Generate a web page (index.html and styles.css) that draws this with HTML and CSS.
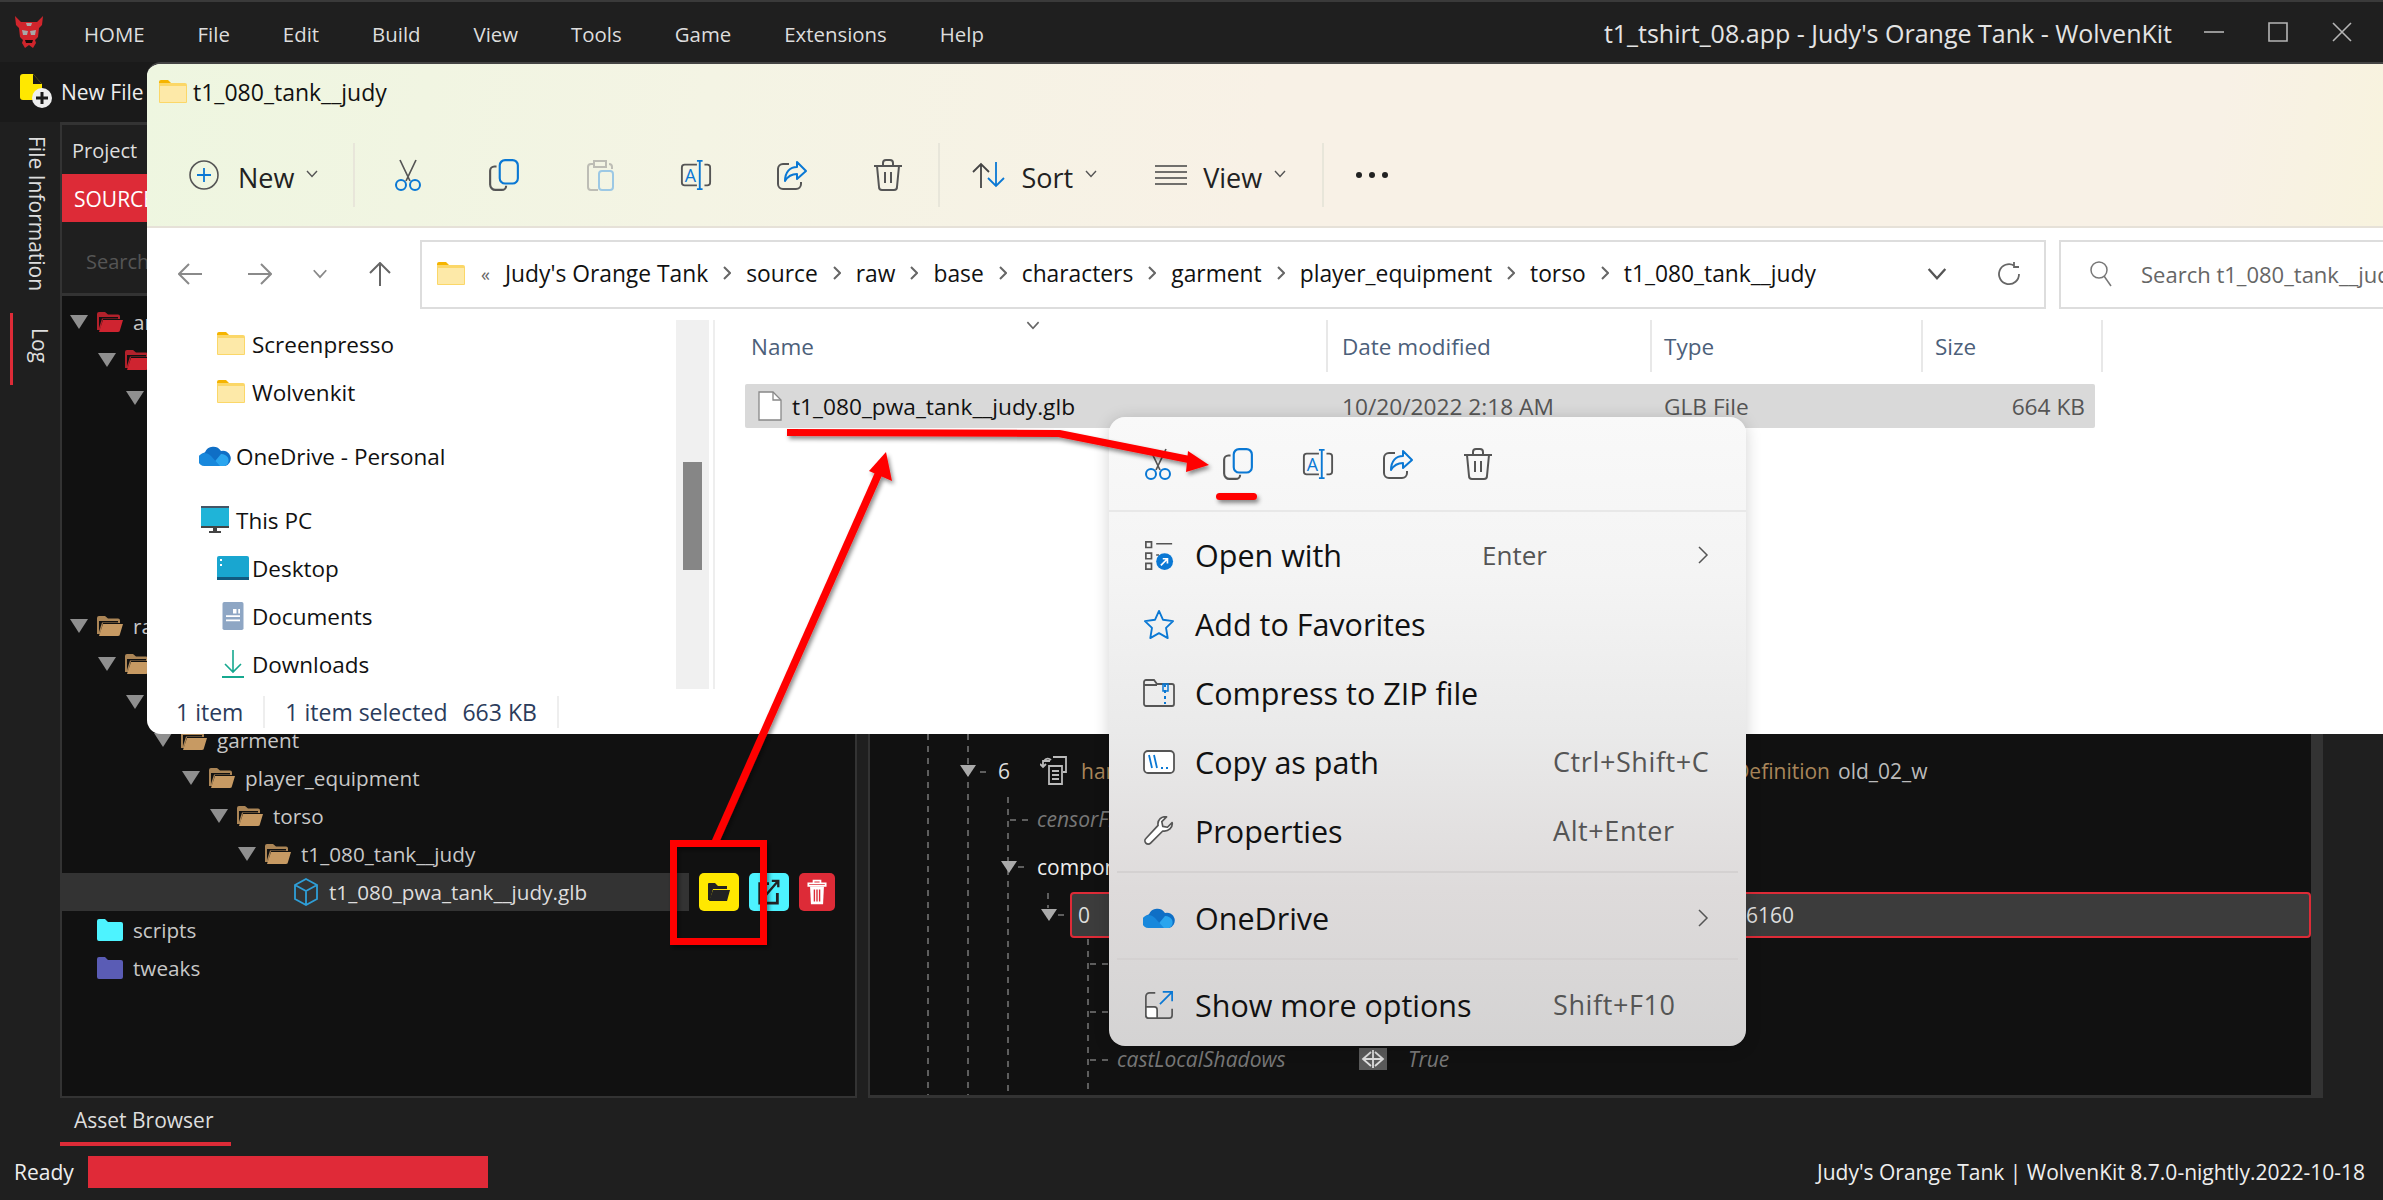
FILE: index.html
```html
<!DOCTYPE html>
<html lang="en">
<head>
  <meta charset="UTF-8">
  <title>t1_tshirt_08.app - Judy's Orange Tank - WolvenKit</title>
  <link rel="stylesheet" href="styles.css">
</head>
<body>

  <!-- shared icons -->
  <svg class="defs" width="0" height="0">
    <symbol id="i-folder" viewBox="0 0 28 24">
      <path d="M0 2a2 2 0 0 1 2-2h7l3 3H0z" fill="#f5b400"/>
      <path d="M0 3h26a2 2 0 0 1 2 2v17a1 1 0 0 1-1 1H1a1 1 0 0 1-1-1z" fill="#fbd768"/>
      <path d="M1 6h26v16H1z" fill="#fde9a8"/>
    </symbol>
    <symbol id="i-tree-folder" viewBox="0 0 26 20">
      <path d="M0 18V2a2 2 0 0 1 2-2h6l3 2.500h10a2 2 0 0 1 2 2V7H6L3 18z" fill="currentColor" opacity="0.85"/>
      <path d="M2 16V5h19v1.500H5z" fill="#111"/>
      <path d="M6 8h20l-3 10a2 2 0 0 1-2 2H2z" fill="currentColor"/>
    </symbol>
    <symbol id="i-flat-folder" viewBox="0 0 26 22">
      <path d="M0 2a2 2 0 0 1 2-2h6l3 3h13a2 2 0 0 1 2 2v15a2 2 0 0 1-2 2H2a2 2 0 0 1-2-2z" fill="currentColor"/>
    </symbol>
    <symbol id="i-cut" viewBox="0 0 30 32">
      <path d="M7 1l10 21M23 1L13 22" fill="none" stroke="#555" stroke-width="1.700"/>
      <circle cx="8" cy="26" r="5" fill="none" stroke="#0a78d4" stroke-width="2"/>
      <circle cx="22" cy="26" r="5" fill="none" stroke="#0a78d4" stroke-width="2"/>
    </symbol>
    <symbol id="i-copy" viewBox="0 0 30 30">
      <path d="M8 7H6a4 4 0 0 0-4 4v13a5 5 0 0 0 5 5h6a4 4 0 0 0 4-4" fill="none" stroke="#555" stroke-width="2"/>
      <rect x="11" y="1" width="17" height="22" rx="5" fill="none" stroke="#0a78d4" stroke-width="2"/>
    </symbol>
    <symbol id="i-paste" viewBox="0 0 30 32">
      <path d="M8 5H6a3 3 0 0 0-3 3v20a3 3 0 0 0 3 3h7M24 5a3 3 0 0 1 3 3v2M9 2h12v6H9z" fill="none" stroke="#bdbdb5" stroke-width="2"/>
      <rect x="14" y="12" width="14" height="19" rx="3" fill="none" stroke="#9cc8e4" stroke-width="2"/>
    </symbol>
    <symbol id="i-rename" viewBox="0 0 34 32">
      <path d="M18 5H5a3 3 0 0 0-3 3v16a3 3 0 0 0 3 3h13M26 5h3a3 3 0 0 1 3 3v16a3 3 0 0 1-3 3h-3" fill="none" stroke="#555" stroke-width="2"/>
      <path d="M18 1h6M21 1v30M18 31h6" fill="none" stroke="#0a78d4" stroke-width="2"/>
    </symbol>
    <symbol id="i-share" viewBox="0 0 32 30">
      <path d="M13 4H7a5 5 0 0 0-5 5v15a5 5 0 0 0 5 5h13a5 5 0 0 0 5-5v-2" fill="none" stroke="#555" stroke-width="2"/>
      <path d="M21 2l9 9-9 8v-5c-6 0-9 2-12 7 0-9 5-14 12-14z" fill="none" stroke="#0a78d4" stroke-width="2" stroke-linejoin="round"/>
    </symbol>
    <symbol id="i-trash" viewBox="0 0 30 32">
      <path d="M1 7h28M10 6V4a3 3 0 0 1 3-3h4a3 3 0 0 1 3 3v2M4 7l2 21a3 3 0 0 0 3 3h12a3 3 0 0 0 3-3l2-21M12 13v11M18 13v11" fill="none" stroke="#555" stroke-width="2"/>
    </symbol>
    <symbol id="i-chev" viewBox="0 0 12 8">
      <path d="M1 1l5 5.500L11 1" fill="none" stroke="currentColor" stroke-width="1.400"/>
    </symbol>
    <symbol id="i-cloud" viewBox="0 0 32 22">
      <path d="M8 21a7 7 0 0 1-2-13.700A9 9 0 0 1 22 6a7.500 7.500 0 0 1 4 15z" fill="#0f6fc6"/>
      <path d="M12 21l10-12a6.500 6.500 0 0 1 4 1 6 6 0 0 1 0 11z" fill="#2aa5ee"/>
      <path d="M6 21a6 6 0 0 1-1-13c3 0 5 1 7 3l9 10z" fill="#1888dc"/>
    </symbol>
    <symbol id="i-sub" viewBox="0 0 12 20">
      <path d="M2 2l8 8-8 8" fill="none" stroke="#555" stroke-width="1.500"/>
    </symbol>
  </svg>

  <div class="app">

    <header class="titlebar">
      <svg class="logo" viewBox="0 0 28 32">
        <path d="M0 0l6 6h16l6-6-1 9-3 3-1 9-3 3 1 3-3 5-4-3-4 3-3-5 1-3-3-3-1-9-3-3z" fill="#d0252c"/>
        <path d="M11 7h6l-1 3h-4z" fill="#a8a8a8"/>
        <path d="M7 14l6 1-1 4H8zM21 14l-6 1 1 4h4z" fill="#a8a8a8"/>
        <path d="M10 24h8l-1 3h-6z" fill="#1a0a0a"/>
      </svg>
      <nav class="menu">
        <span>HOME</span><span>File</span><span>Edit</span><span>Build</span><span>View</span><span>Tools</span><span>Game</span><span>Extensions</span><span>Help</span>
      </nav>
      <div class="app-title">t1_tshirt_08.app - Judy's Orange Tank - WolvenKit</div>
      <div class="win-btns">
        <svg viewBox="0 0 20 20"><path d="M0 10h20" /></svg>
        <svg viewBox="0 0 20 20"><path d="M1 1h18v18H1z" /></svg>
        <svg viewBox="0 0 20 20"><path d="M1 1l18 18M19 1L1 19" /></svg>
      </div>
    </header>

    <div class="toolbar">
      <svg class="new-file" viewBox="0 0 32 36">
        <path d="M0 3a3 3 0 0 1 3-3h10l9 10v16H3a3 3 0 0 1-3-3z" fill="#ffe800"/>
        <path d="M13 0l9 10h-9z" fill="#1a1a1a"/>
        <circle cx="22" cy="24" r="10" fill="#eee"/>
        <path d="M22 18v12M16 24h12" stroke="#1a1a1a" stroke-width="3"/>
      </svg>
      <span>New File</span>
    </div>

    <div class="main">
      <aside class="rail">
        <div class="rail-item">File Information</div>
        <div class="rail-item rail-active">Log</div>
      </aside>

      <section class="project">
        <div class="project-head">Project</div>
        <div class="source-tab">SOURCE</div>
        <div class="search-row">Search</div>
        <div class="tree">
          <div class="row lv0 red"><i class="tri"></i><svg class="tf"><use href="#i-tree-folder"/></svg><span>archive</span></div>
          <div class="row lv1 red"><i class="tri"></i><svg class="tf"><use href="#i-tree-folder"/></svg><span>base</span></div>
          <div class="row lv2"><i class="tri"></i><svg class="tf"><use href="#i-tree-folder"/></svg><span>characters</span></div>
          <div class="tree-gap"></div>
          <div class="row lv0"><i class="tri"></i><svg class="tf"><use href="#i-tree-folder"/></svg><span>raw</span></div>
          <div class="row lv1"><i class="tri"></i><svg class="tf"><use href="#i-tree-folder"/></svg><span>base</span></div>
          <div class="row lv2"><i class="tri"></i><svg class="tf"><use href="#i-tree-folder"/></svg><span>characters</span></div>
          <div class="row lv3"><i class="tri"></i><svg class="tf"><use href="#i-tree-folder"/></svg><span>garment</span></div>
          <div class="row lv4"><i class="tri"></i><svg class="tf"><use href="#i-tree-folder"/></svg><span>player_equipment</span></div>
          <div class="row lv5"><i class="tri"></i><svg class="tf"><use href="#i-tree-folder"/></svg><span>torso</span></div>
          <div class="row lv6"><i class="tri"></i><svg class="tf"><use href="#i-tree-folder"/></svg><span>t1_080_tank__judy</span></div>
          <div class="file-line">
            <div class="row lv7 selected">
              <i class="tri none"></i>
              <svg class="tf" viewBox="0 0 26 28"><path d="M13 1l11 6v14l-11 6-11-6V7zM2 7l11 6 11-6M13 13v14" fill="none" stroke="#2f9fd8" stroke-width="1.800"/></svg>
              <span>t1_080_pwa_tank__judy.glb</span>
            </div>
            <div class="file-btn yellow">
              <svg viewBox="0 0 24 24"><path d="M1 20V4a1 1 0 0 1 1-1h6l3 3h9v3H6L3 20z" fill="#222"/><path d="M6 10h17l-3 11H2z" fill="#222"/></svg>
            </div>
            <div class="file-btn cyan">
              <svg viewBox="0 0 24 28"><path d="M12 5H2v21h19V15" fill="none" stroke="#222" stroke-width="3"/><path d="M9 17L22 2M15 2h7v7" fill="none" stroke="#222" stroke-width="2.500"/></svg>
            </div>
            <div class="file-btn crimson">
              <svg viewBox="0 0 22 30"><path d="M7 5V2h8v3M1 5h20v3H1z" fill="none" stroke="#fff" stroke-width="2"/><path d="M3 9h16l-1 20H4z" fill="#fff"/><path d="M8 12v14M11 12v14M14 12v14" stroke="#dd2b37" stroke-width="1.600"/></svg>
            </div>
          </div>
          <div class="row lv0 cyan-f"><svg class="tf flat"><use href="#i-flat-folder"/></svg><span>scripts</span></div>
          <div class="row lv0 violet-f"><svg class="tf flat"><use href="#i-flat-folder"/></svg><span>tweaks</span></div>
        </div>
      </section>

      <section class="props">
        <!-- guide lines of the property tree -->
        <svg class="guides" width="1453" height="973">
          <path d="M58 612V973M98 612V973M138 675V973M218 817V973M178 771V786M110 650h12M140 698h20M148 745h12M188 793h12M220 842h20M220 890h20M220 938h20" />
        </svg>
        <div class="prop-rows">
          <div class="prop lv-a">
            <i class="tri small"></i><span class="dash"></span><span class="idx">6</span>
            <svg class="type-ico" viewBox="0 0 30 30"><path d="M10 5H3v6M0 8l3 3 3-3M4 5c2-3 5-3 7-1M13 1h13v15h-3M9 10h13v18H9zM12 15h7M12 19h7M12 23h7" fill="none" stroke="#bbb" stroke-width="1.800"/></svg>
            <span class="prop-type"><span>handle</span><span>Definition</span></span>
            <span class="prop-val">old_02_w</span>
          </div>
          <div class="prop lv-b"><span class="italic">censorFlags</span></div>
          <div class="prop lv-b has-tri"><i class="tri small"></i><span class="bright">components</span></div>
          <div class="prop-line">
            <i class="tri small"></i>
            <div class="prop-sel">
              <span class="idx">0</span><span class="sel-val">6160</span>
            </div>
          </div>
          <div class="prop lv-c"><span class="italic">name</span></div>
          <div class="prop lv-c"><span class="italic">mesh</span></div>
          <div class="prop lv-c">
            <span class="italic cast">castLocalShadows</span>
            <svg class="bool" viewBox="0 0 28 22"><rect width="28" height="22" fill="#5a5a5a"/><path d="M12 4L4 11l8 7M16 4l8 7-8 7M4 11h20M14 2v18" fill="none" stroke="#ddd" stroke-width="1.800"/></svg>
            <span class="italic">True</span>
          </div>
        </div>
        <div class="props-scroll"></div>
      </section>
    </div>

    <div class="tabs"><div class="tab">Asset Browser</div></div>

    <footer class="statusbar">
      <span>Ready</span>
      <div class="progress"></div>
      <span class="status-right">Judy's Orange Tank | WolvenKit 8.7.0-nightly.2022-10-18</span>
    </footer>
  </div>

  <!-- explorer window, floating over the app -->
  <div class="explorer">
    <div class="ex-head">
      <div class="ex-title">
        <svg class="ex-folder"><use href="#i-folder"/></svg>
        <span>t1_080_tank__judy</span>
      </div>
      <div class="cmdbar">
        <svg class="plus" viewBox="0 0 30 30"><circle cx="15" cy="15" r="14" fill="none" stroke="#555" stroke-width="1.600"/><path d="M15 8v14M8 15h14" stroke="#0a78d4" stroke-width="1.800"/></svg>
        <span class="cmd-label new">New</span>
        <svg class="chev"><use href="#i-chev"/></svg>
        <i class="cmd-sep first"></i>
        <svg class="cmd-ico"><use href="#i-cut"/></svg>
        <svg class="cmd-ico"><use href="#i-copy"/></svg>
        <svg class="cmd-ico"><use href="#i-paste"/></svg>
        <svg class="cmd-ico" viewBox="0 0 34 32"><use href="#i-rename"/><text x="5" y="23" class="icon-letter">A</text></svg>
        <svg class="cmd-ico"><use href="#i-share"/></svg>
        <svg class="cmd-ico"><use href="#i-trash"/></svg>
        <i class="cmd-sep second"></i>
        <svg class="sort" viewBox="0 0 34 26"><path d="M9 26V2M1 10l8-8 8 8" fill="none" stroke="#444" stroke-width="1.800"/><path d="M24 0v24M16 16l8 8 8-8" fill="none" stroke="#0a78d4" stroke-width="1.800"/></svg>
        <span class="cmd-label">Sort</span>
        <svg class="chev"><use href="#i-chev"/></svg>
        <svg class="view" viewBox="0 0 32 20"><path d="M0 1h32M0 7h32M0 13h32M0 19h32" stroke="#444" stroke-width="1.600"/></svg>
        <span class="cmd-label">View</span>
        <svg class="chev"><use href="#i-chev"/></svg>
        <i class="cmd-sep third"></i>
        <div class="dots"><i></i><i></i><i></i></div>
      </div>
    </div>

    <div class="ex-nav">
      <div class="nav-btns">
        <svg width="24" height="22" viewBox="0 0 24 22"><path d="M24 11H2M11 1L1 11l10 10" fill="none" stroke="#8a8a8a" stroke-width="2"/></svg>
        <svg class="nav-fwd" width="24" height="22" viewBox="0 0 24 22"><path d="M0 11h22M13 1l10 10-10 10" fill="none" stroke="#8a8a8a" stroke-width="2"/></svg>
        <svg class="nav-down" width="16" height="10"><use href="#i-chev"/></svg>
        <svg class="nav-up" width="22" height="24" viewBox="0 0 22 24"><path d="M11 24V2M1 11L11 1l10 10" fill="none" stroke="#666" stroke-width="2"/></svg>
      </div>
      <div class="address">
        <svg class="ex-folder"><use href="#i-folder"/></svg>
        <span class="more">«</span>
        <div class="crumbs">
          <span>Judy's Orange Tank</span><svg class="sep" viewBox="0 0 8 14"><path d="M1 1l6 6-6 6"/></svg>
          <span>source</span><svg class="sep" viewBox="0 0 8 14"><path d="M1 1l6 6-6 6"/></svg>
          <span>raw</span><svg class="sep" viewBox="0 0 8 14"><path d="M1 1l6 6-6 6"/></svg>
          <span>base</span><svg class="sep" viewBox="0 0 8 14"><path d="M1 1l6 6-6 6"/></svg>
          <span>characters</span><svg class="sep" viewBox="0 0 8 14"><path d="M1 1l6 6-6 6"/></svg>
          <span>garment</span><svg class="sep" viewBox="0 0 8 14"><path d="M1 1l6 6-6 6"/></svg>
          <span>player_equipment</span><svg class="sep" viewBox="0 0 8 14"><path d="M1 1l6 6-6 6"/></svg>
          <span>torso</span><svg class="sep" viewBox="0 0 8 14"><path d="M1 1l6 6-6 6"/></svg>
          <span>t1_080_tank__judy</span>
        </div>
        <svg class="addr-down"><use href="#i-chev"/></svg>
        <svg class="refresh" viewBox="0 0 24 24"><path d="M17 3.500A10 10 0 1 0 22 12M17 0v5h5" fill="none" stroke="#666" stroke-width="1.800"/></svg>
      </div>
      <div class="search-box">
        <svg viewBox="0 0 22 26"><circle cx="9" cy="9" r="8" fill="none" stroke="#777" stroke-width="1.500"/><path d="M14 15l7 10" stroke="#777" stroke-width="1.500"/></svg>
        <span>Search t1_080_tank__judy</span>
      </div>
    </div>

    <div class="ex-body">
      <div class="sidenav">
        <div class="nav-item in-1"><svg class="ex-folder"><use href="#i-folder"/></svg><span>Screenpresso</span></div>
        <div class="nav-item in-1"><svg class="ex-folder"><use href="#i-folder"/></svg><span>Wolvenkit</span></div>
        <div class="nav-item in-0 gap"><svg class="nav-ico"><use href="#i-cloud"/></svg><span>OneDrive - Personal</span></div>
        <div class="nav-item in-0 gap">
          <svg class="nav-ico" viewBox="0 0 32 28"><rect x="2" width="28" height="22" fill="#1fb4d8"/><path d="M2 0h28v2H2z" fill="#456"/><path d="M2 20h28v2H2zM14 22h4v3h-4zM10 25h12v2H10z" fill="#444"/></svg>
          <span>This PC</span>
        </div>
        <div class="nav-item in-1 wide">
          <svg class="nav-ico" viewBox="0 0 32 24"><rect width="32" height="24" rx="2" fill="#19a6d0"/><path d="M0 21h32v3H0z" fill="#115a80"/><path d="M3 3h2v2H3zM3 8h2v2H3z" fill="#fff"/></svg>
          <span>Desktop</span>
        </div>
        <div class="nav-item in-1 wide">
          <svg class="nav-ico" viewBox="0 0 32 32"><rect x="4" width="24" height="32" rx="2" fill="#8ea6c4"/><path d="M16 8h4v5h-4zM22 8h2v5h-2zM8 15h16v2H8zM8 20h16v2H8z" fill="#fff"/></svg>
          <span>Documents</span>
        </div>
        <div class="nav-item in-1 wide">
          <svg class="nav-ico" viewBox="0 0 32 28"><path d="M16 0v22M8 14l8 8 8-8" fill="none" stroke="#16a88f" stroke-width="1.600"/><path d="M5 27h22" stroke="#16a88f" stroke-width="2"/></svg>
          <span>Downloads</span>
        </div>
      </div>
      <div class="side-scroll"><div class="side-thumb"></div></div>

      <div class="files">
        <div class="file-head">
          <div class="col c-name">Name<svg class="sort-chev"><use href="#i-chev"/></svg></div>
          <div class="col c-date">Date modified</div>
          <div class="col c-type">Type</div>
          <div class="col c-size">Size</div>
        </div>
        <div class="file-row">
          <div class="c-name">
            <svg class="doc" viewBox="0 0 24 30"><path d="M1 1h14l8 8v20H1z" fill="#fff" stroke="#888" stroke-width="1.300"/><path d="M15 1v8h8" fill="none" stroke="#888" stroke-width="1.300"/></svg>
            <span>t1_080_pwa_tank__judy.glb</span>
          </div>
          <div class="c-date muted">10/20/2022 2:18 AM</div>
          <div class="c-type muted">GLB File</div>
          <div class="c-size muted right">664 KB</div>
        </div>
      </div>
    </div>

    <div class="ex-status">
      <span>1 item</span><i></i><span>1 item selected</span><span class="sz">663 KB</span><i></i>
    </div>
  </div>

  <!-- right click menu -->
  <div class="ctx">
    <div class="ctx-top">
      <svg><use href="#i-cut"/></svg>
      <svg><use href="#i-copy"/></svg>
      <svg viewBox="0 0 34 32"><use href="#i-rename"/><text x="5" y="23" class="icon-letter">A</text></svg>
      <svg><use href="#i-share"/></svg>
      <svg><use href="#i-trash"/></svg>
    </div>
    <div class="ctx-list">
      <div class="ctx-row">
        <svg class="ctx-ico" viewBox="0 0 32 32"><path d="M2 2h6v6H2zM2 14h6v6H2zM2 25h6v6H2zM13 4h17M13 16h3" fill="none" stroke="#555" stroke-width="1.800"/><circle cx="22" cy="23" r="9" fill="#0a78d4"/><path d="M18 27l7-7M20 20h5v5" fill="none" stroke="#fff" stroke-width="1.800"/></svg>
        <span class="ctx-name short">Open with</span><span class="key enter">Enter</span><svg class="ctx-sub"><use href="#i-sub"/></svg>
      </div>
      <div class="ctx-row">
        <svg class="ctx-ico" viewBox="0 0 32 32"><path d="M16 2l4.300 9.500L31 13l-7.500 7.200L25.300 31 16 25.800 6.700 31l1.800-10.800L1 13l10.700-1.500z" fill="none" stroke="#0a78d4" stroke-width="2" stroke-linejoin="round"/></svg>
        <span class="ctx-name">Add to Favorites</span>
      </div>
      <div class="ctx-row">
        <svg class="ctx-ico" viewBox="0 0 32 28"><path d="M1 6V3a2 2 0 0 1 2-2h8l3 4h15a2 2 0 0 1 2 2v18a2 2 0 0 1-2 2H3a2 2 0 0 1-2-2V6h13" fill="none" stroke="#555" stroke-width="1.800"/><path d="M22 5v20" stroke="#0a78d4" stroke-width="2" stroke-dasharray="3 3"/><rect x="20" y="5" width="5" height="7" fill="none" stroke="#0a78d4" stroke-width="1.500"/></svg>
        <span class="ctx-name">Compress to ZIP file</span>
      </div>
      <div class="ctx-row">
        <svg class="ctx-ico" viewBox="0 0 32 24"><rect x="1" y="1" width="30" height="22" rx="4" fill="#fff" stroke="#555" stroke-width="1.800"/><path d="M6 5l3 13M11 5l3 13" stroke="#0a78d4" stroke-width="1.800"/><path d="M18 17h2v2h-2zM23 17h2v2h-2z" fill="#0a78d4"/></svg>
        <span class="ctx-name">Copy as path</span><span class="key">Ctrl+Shift+C</span>
      </div>
      <div class="ctx-row">
        <svg class="ctx-ico" viewBox="0 0 32 32"><path d="M30 7l-5 5-5-1-1-5 5-5c-5-1-10 3-9 9L2 24a3.500 3.500 0 0 0 5 5l13-13c6 1 11-4 10-9z" fill="#fff" stroke="#555" stroke-width="1.800" stroke-linejoin="round"/></svg>
        <span class="ctx-name">Properties</span><span class="key">Alt+Enter</span>
      </div>
      <div class="ctx-div"></div>
      <div class="ctx-row">
        <svg class="ctx-ico"><use href="#i-cloud"/></svg>
        <span class="ctx-name full">OneDrive</span><svg class="ctx-sub"><use href="#i-sub"/></svg>
      </div>
      <div class="ctx-div"></div>
      <div class="ctx-row">
        <svg class="ctx-ico" viewBox="0 0 32 32"><path d="M12 3H6a4 4 0 0 0-4 4v20a3 3 0 0 0 3 3h22a3 3 0 0 0 3-3V20" fill="none" stroke="#555" stroke-width="1.800"/><path d="M2 18h9a3 3 0 0 1 3 3v9H5a3 3 0 0 1-3-3z" fill="#fff" stroke="#555" stroke-width="1.800"/><path d="M17 15L29 3M20 2h10v10" fill="none" stroke="#0a78d4" stroke-width="1.800"/></svg>
        <span class="ctx-name">Show more options</span><span class="key">Shift+F10</span>
      </div>
    </div>
  </div>

  <!-- hand drawn annotations from the screenshot tool -->
  <svg class="notes" width="2383" height="1200">
    <defs>
      <filter id="soft" x="-10%" y="-10%" width="120%" height="120%">
        <feDropShadow dx="2" dy="3" stdDeviation="2" flood-color="#000" flood-opacity="0.45"/>
      </filter>
    </defs>
    <g filter="url(#soft)" fill="#f00">
      <path d="M787 429l273 1 130 26 -2 7-130-26-271-1z"/>
      <path d="M1188 451l21 14-23 7z"/>
      <path d="M712 840L876 470l7 3L719 843z"/>
      <path d="M886 452l6 29-23-10z"/>
      <rect x="1216" y="493" width="41" height="7" rx="3.500"/>
      <path fill-rule="evenodd" d="M670 840h97v105h-97zM677 847v91h83v-91z"/>
    </g>
  </svg>

</body>
</html>
```

FILE: styles.css
```css
* {
  box-sizing: border-box;
}
body {
  margin: 0;
  width: 2383px;
  height: 1200px;
  overflow: hidden;
  background: #1f1f1f;
  color: #ddd;
  font-family: "Open Sans", "Noto Sans", sans-serif;
  position: relative;
}
.defs {
  position: absolute;
}
.icon-letter {
  font-family: "Open Sans", sans-serif;
  font-size: 19px;
  fill: #0a78d4;
}

/* app shell */
.app {
  width: 2383px;
  height: 1200px;
  display: flex;
  flex-direction: column;
  border-top: 2px solid #3a3a3a;
}
.titlebar {
  height: 60px;
  display: flex;
  align-items: center;
  padding-left: 15px;
  font-size: 20.400px;
}
.logo {
  width: 28px;
  height: 32px;
  margin-right: 41px;
}
.menu {
  display: flex;
  gap: 53px;
  padding-top: 4px;
}
.app-title {
  margin-left: auto;
  padding-top: 2px;
  color: #e4e4e4;
  font-size: 25px;
}
.win-btns {
  display: flex;
  gap: 44px;
  margin: 0 31px 0 32px;
}
.win-btns svg {
  width: 20px;
  height: 20px;
  fill: none;
  stroke: #b5b5b5;
  stroke-width: 1.600;
}
.toolbar {
  height: 60px;
  display: flex;
  align-items: center;
  gap: 9px;
  padding-left: 20px;
  background: #1a1a1a;
  font-size: 21px;
  color: #eee;
}
.new-file {
  width: 32px;
  height: 36px;
}

.main {
  height: 976px;
  display: flex;
}
.rail {
  width: 60px;
  padding-top: 14px;
  flex-shrink: 0;
}
.rail-item {
  writing-mode: vertical-rl;
  margin-left: 23px;
  font-size: 21px;
  color: #ddd;
  line-height: 28px;
}
.rail-active {
  margin: 22px 0 0 10px;
  padding: 15px 0 22px 10px;
  border-left: 3px solid #dd2b37;
  width: 44px;
}

/* project tree */
.project {
  width: 797px;
  border: 2px solid #333;
  border-top-width: 3px;
  display: flex;
  flex-direction: column;
}
.project-head {
  height: 49px;
  line-height: 51px;
  padding-left: 10px;
  font-size: 20px;
}
.source-tab {
  height: 48px;
  line-height: 50px;
  width: 200px;
  padding-left: 12px;
  background: #dd2b37;
  color: #fff;
  font-size: 21px;
}
.search-row {
  height: 74px;
  line-height: 80px;
  padding-left: 24px;
  font-size: 20px;
  color: #555;
  border-bottom: 3px solid #333;
}
.tree {
  flex: 1;
  background: #111;
  padding-top: 7px;
}
.tree-gap {
  height: 190px;
}
.row {
  height: 38px;
  display: flex;
  align-items: center;
  font-size: 20.700px;
  color: #c8c8c8;
}
.row span {
  margin-left: 10px;
  white-space: nowrap;
}
.row .tf {
  color: #c79a63;
}
.lv0 { padding-left: 8px; }
.lv1 { padding-left: 36px; }
.lv2 { padding-left: 64px; }
.lv3 { padding-left: 92px; }
.lv4 { padding-left: 120px; }
.lv5 { padding-left: 148px; }
.lv6 { padding-left: 176px; }
.lv7 { padding-left: 204px; }
.cyan-f, .violet-f {
  padding-left: 35px;
}
.tri {
  width: 18px;
  height: 14px;
  margin-right: 9px;
  background: #8f8f8f;
  clip-path: polygon(0 0, 100% 0, 50% 100%);
  flex-shrink: 0;
}
.tri.none {
  background: none;
}
.tf {
  width: 26px;
  height: 20px;
  flex-shrink: 0;
}
.tf.flat {
  height: 22px;
}
.red .tf {
  color: #cf2430;
}
.cyan-f .tf {
  color: #4df3ff;
}
.violet-f .tf {
  color: #5a5cb5;
}
.file-line {
  display: flex;
  height: 38px;
}
.selected {
  width: 627px;
  background: #333;
  color: #ddd;
}
.selected .tf {
  height: 28px;
}
.file-btn {
  width: 40px;
  height: 38px;
  margin-left: 10px;
  border-radius: 5px;
  display: flex;
  align-items: center;
  justify-content: center;
}
.file-btn svg {
  width: 24px;
  height: 26px;
}
.yellow {
  background: #ffe800;
}
.cyan {
  background: #4df3ff;
}
.crimson {
  background: #dd2b37;
  width: 36px;
}

/* properties panel */
.props {
  margin-left: 11px;
  width: 1455px;
  border-left: 2px solid #333;
  border-bottom: 3px solid #333;
  background: #111;
  position: relative;
}
.guides {
  position: absolute;
  left: 0;
  top: 0;
  fill: none;
  stroke: #5e5e5e;
  stroke-width: 2;
  stroke-dasharray: 6 6;
}
.prop-rows {
  padding-top: 625px;
  position: relative;
}
.prop {
  height: 48px;
  display: flex;
  align-items: center;
  font-size: 21px;
  color: #ccc;
  white-space: nowrap;
}
.lv-a {
  padding-left: 90px;
}
.lv-b {
  padding-left: 167px;
}
.lv-b.has-tri {
  padding-left: 131px;
}
.lv-c {
  padding-left: 247px;
}
.tri.small {
  width: 16px;
  height: 12px;
  margin: 0;
  background: #aaa;
}
.has-tri .tri.small {
  margin-right: 20px;
}
.dash {
  width: 22px;
}
.idx {
  width: 42px;
  color: #ddd;
}
.type-ico {
  width: 30px;
  height: 30px;
  margin-right: 11px;
}
.prop-type {
  width: 749px;
  display: flex;
  justify-content: space-between;
  color: #a9865a;
}
.prop-val {
  margin-left: 8px;
  color: #bbb;
}
.italic {
  font-style: italic;
  color: #777;
}
.bright {
  color: #eee;
}
.cast {
  width: 242px;
}
.bool {
  width: 28px;
  height: 22px;
  margin-right: 21px;
}
.prop-line {
  height: 48px;
  display: flex;
  align-items: center;
  gap: 13px;
  padding: 0 12px 0 171px;
}
.prop-sel {
  flex: 1;
  height: 46px;
  display: flex;
  align-items: center;
  padding-left: 6px;
  background: #3c3c3c;
  border: 2px solid #dd2b37;
  border-radius: 4px;
  font-size: 21px;
}
.prop-sel .idx {
  width: 668px;
}
.sel-val {
  color: #ddd;
}
.props-scroll {
  position: absolute;
  right: 0;
  top: 0;
  bottom: 0;
  width: 12px;
  background: #333;
}

.tabs {
  height: 50px;
  padding-left: 60px;
}
.tab {
  width: 171px;
  height: 48px;
  line-height: 44px;
  padding-left: 14px;
  font-size: 21px;
  color: #ddd;
  border-bottom: 4px solid #dd2b37;
}
.statusbar {
  flex: 1;
  display: flex;
  align-items: center;
  padding: 0 18px 4px 14px;
  font-size: 21px;
  color: #eee;
}
.progress {
  width: 400px;
  height: 32px;
  margin-left: 14px;
  background: #e02a38;
}
.status-right {
  margin-left: auto;
}

/* explorer window */
.explorer {
  position: absolute;
  left: 147px;
  top: 62px;
  right: 0;
  height: 672px;
  background: #fff;
  border-top: 2px solid #444;
  border-radius: 14px 0 0 14px;
  overflow: hidden;
  display: flex;
  flex-direction: column;
  color: #111;
}
.ex-head {
  height: 164px;
  flex-shrink: 0;
  background: linear-gradient(100deg, #eef6e0 0%, #f4f4e4 25%, #f8f1e6 50%, #f8f1e6 92%, #f8f3de 100%);
  border-bottom: 2px solid #e6e1d8;
  padding: 0 0 0 12px;
}
.ex-title {
  height: 56px;
  display: flex;
  align-items: center;
  gap: 6px;
  font-size: 23px;
}
.ex-folder {
  width: 28px;
  height: 24px;
  flex-shrink: 0;
}
.cmdbar {
  display: flex;
  align-items: center;
  height: 64px;
  margin-top: 23px;
  padding-left: 30px;
  color: #555;
}
.plus {
  width: 30px;
  height: 30px;
  margin-right: 19px;
}
.cmd-label {
  padding-top: 5px;
  font-size: 27px;
  color: #222;
}
.chev {
  width: 12px;
  height: 8px;
  margin: 0 0 2px 12px;
  color: #555;
}
.cmd-sep {
  width: 2px;
  height: 64px;
  background: #e8e6da;
}
.cmd-sep.first {
  margin: 0 37px 0 35px;
}
.cmd-sep.second {
  margin: 0 32px 0 34px;
}
.cmd-sep.third {
  margin: 0 32px 0 36px;
}
.cmd-ico {
  width: 32px;
  height: 32px;
  margin-right: 64px;
}
.cmd-ico:nth-of-type(8) {
  margin-right: 0;
}
.sort {
  width: 34px;
  height: 26px;
  margin-right: 15px;
}
.view {
  width: 32px;
  height: 20px;
  margin: 0 16px 0 58px;
}
.dots {
  display: flex;
  gap: 7px;
}
.dots i {
  width: 6px;
  height: 6px;
  border-radius: 50%;
  background: #222;
}

.ex-nav {
  height: 92px;
  flex-shrink: 0;
  display: flex;
  align-items: center;
  padding: 0 0 0 31px;
}
.nav-btns {
  width: 242px;
  flex-shrink: 0;
  display: flex;
  align-items: center;
}
.nav-btns svg {
  flex-shrink: 0;
}
.nav-fwd {
  margin-left: 46px;
}
.nav-btns .nav-down {
  color: #888;
  margin-left: 40px;
}
.nav-up {
  margin-left: 41px;
}
.address {
  width: 1626px;
  height: 69px;
  display: flex;
  align-items: center;
  padding-left: 15px;
  border: 2px solid #ddd;
  font-size: 22.800px;
  flex-shrink: 0;
}
.more {
  margin: 0 15px 0 16px;
  font-size: 18px;
  color: #666;
}
.crumbs {
  display: flex;
  align-items: center;
  gap: 15px;
  white-space: nowrap;
  margin-top: -2px;
}
.sep {
  width: 8px;
  height: 14px;
  fill: none;
  stroke: #666;
  stroke-width: 2;
}
.addr-down {
  width: 20px;
  height: 14px;
  margin-left: auto;
  color: #555;
}
.refresh {
  width: 24px;
  height: 24px;
  margin: 0 23px 0 50px;
}
.search-box {
  flex: 1;
  height: 69px;
  margin-left: 13px;
  display: flex;
  align-items: center;
  padding-left: 29px;
  border: 2px solid #ddd;
  border-right: 0;
  font-size: 22px;
  color: #666;
  white-space: nowrap;
  overflow: hidden;
}
.search-box svg {
  width: 22px;
  height: 26px;
  margin-right: 29px;
  flex-shrink: 0;
}

.ex-body {
  height: 369px;
  flex-shrink: 0;
  display: flex;
}
.sidenav {
  width: 529px;
  flex-shrink: 0;
  font-size: 22.500px;
}
.nav-item {
  height: 48px;
  display: flex;
  align-items: center;
  white-space: nowrap;
}
.nav-item.gap {
  margin-top: 16px;
}
.in-0 {
  padding-left: 52px;
}
.in-0 span {
  margin-left: 5px;
}
.in-1 {
  padding-left: 70px;
}
.in-1 span {
  margin-left: 7px;
}
.in-1.wide span {
  margin-left: 3px;
}
.nav-ico {
  width: 32px;
  height: 28px;
  flex-shrink: 0;
}
.side-scroll {
  width: 33px;
  padding: 142px 7px 0;
  background: #f0f0f0;
  flex-shrink: 0;
}
.side-thumb {
  height: 108px;
  background: #868686;
}
.files {
  flex: 1;
  border-left: 2px solid #eee;
  margin-left: 4px;
  padding-left: 30px;
  min-width: 0;
}
.file-head {
  height: 52px;
  display: flex;
  align-items: center;
  font-size: 22.500px;
  color: #4c607a;
  position: relative;
}
.c-name {
  width: 583px;
  display: flex;
  align-items: center;
  flex-shrink: 0;
}
.col {
  height: 52px;
  line-height: 54px;
  padding-left: 6px;
  border-right: 2px solid #e8e8e8;
}
.col.c-name {
  display: block;
}
.c-date {
  width: 324px;
  padding-left: 14px;
  flex-shrink: 0;
}
.c-type {
  width: 271px;
  padding-left: 12px;
  flex-shrink: 0;
}
.c-size {
  width: 180px;
  padding-left: 12px;
  flex-shrink: 0;
}
.col.c-date {
  padding-left: 14px;
}
.col.c-type, .col.c-size {
  padding-left: 12px;
}
.sort-chev {
  position: absolute;
  left: 281px;
  top: 1px;
  width: 14px;
  height: 9px;
  color: #666;
}
.file-row {
  width: 1350px;
  height: 44px;
  margin-top: 12px;
  display: flex;
  align-items: center;
  background: #d9d9d9;
  border-radius: 2px;
  font-size: 22.700px;
}
.file-row .c-name {
  padding-left: 13px;
}
.file-row .c-size {
  width: 172px;
}
.doc {
  width: 24px;
  height: 30px;
  margin-right: 10px;
}
.muted {
  color: #555;
}
.right {
  text-align: right;
  padding-right: 10px;
}
.ex-status {
  flex: 1;
  display: flex;
  align-items: center;
  padding-left: 29px;
  font-size: 23px;
  color: #2b3c5c;
}
.ex-status i {
  width: 2px;
  height: 32px;
  margin: 0 20px;
  background: #eee;
}
.ex-status .sz {
  margin-left: 15px;
}

/* context menu */
.ctx {
  position: absolute;
  left: 1109px;
  top: 417px;
  width: 637px;
  height: 629px;
  border-radius: 16px;
  background: linear-gradient(180deg, #f9f9f9 0%, #f4f4f4 25%, #eaeaea 50%, #dedbdb 75%, #d4d3d3 100%);
  box-shadow: 0 2px 16px rgba(0, 0, 0, 0.18);
  color: #111;
}
.ctx-top {
  height: 95px;
  display: flex;
  align-items: center;
  gap: 48px;
  padding-left: 33px;
  border-bottom: 2px solid #e8e8e8;
}
.ctx-top svg {
  width: 32px;
  height: 32px;
  flex-shrink: 0;
}
.ctx-list {
  padding-top: 8px;
}
.ctx-row {
  height: 69px;
  display: flex;
  align-items: center;
  padding-left: 34px;
  font-size: 30.500px;
  white-space: nowrap;
}
.ctx-ico {
  width: 32px;
  height: 30px;
  margin-right: 20px;
  flex-shrink: 0;
}
.ctx-name {
  width: 358px;
}
.ctx-name.short {
  width: 287px;
}
.ctx-name.full {
  width: 502px;
}
.key {
  font-size: 27px;
  letter-spacing: 0.6px;
  color: #555;
}
.key.enter {
  width: 215px;
  font-size: 26px;
  letter-spacing: 0;
}
.ctx-sub {
  width: 12px;
  height: 20px;
  flex-shrink: 0;
}
.ctx-div {
  height: 2px;
  margin: 6px 8px 10px;
  background: #d4d1d1;
}

.notes {
  position: absolute;
  left: 0;
  top: 0;
  pointer-events: none;
}
```
